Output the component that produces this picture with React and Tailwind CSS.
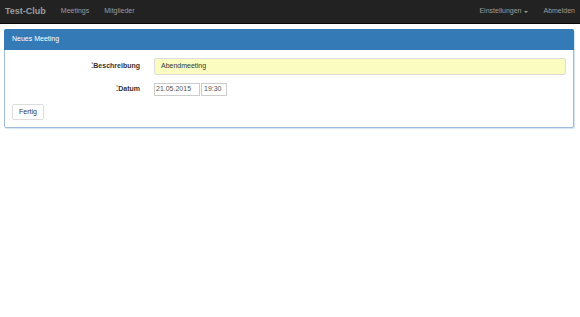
export default function App() {
  const font = { fontFamily: '"Liberation Sans", Arial, sans-serif' };
  return (
    <div className="w-[580px] h-[317px] bg-white" style={font}>
      <div className="h-[24px] bg-[#222222] border-b border-[#080808] flex items-center text-[7px] text-[#9d9d9d]">
        <span className="ml-[5px] text-[9px] font-bold">Test-Club</span>
        <span className="ml-[15px]">Meetings</span>
        <span className="ml-[15px]">Mitglieder</span>
        <div className="flex-1" />
        <span className="flex items-center">
          Einstellungen
          <span className="ml-[3px] w-0 h-0 border-l-[2px] border-r-[2px] border-t-[2px] border-l-transparent border-r-transparent border-t-[#9d9d9d]" />
        </span>
        <span className="ml-[15px] mr-[5px]">Abmelden</span>
      </div>
      <div className="ml-[4px] mt-[5px] w-[570px] border border-[#9fbbdb] rounded-[2px] shadow-[1px_1px_1px_#d3e2f1] bg-white">
        <div className="h-[21px] -mx-[1px] -mt-[1px] bg-[#337ab7] rounded-t-[2px] flex items-center pl-[8px] text-[7px] text-white">
          Neues Meeting
        </div>
        <div className="pt-[7px] pb-[7px] pl-[7px] pr-[7px] text-[7px] text-[#333]">
          <div className="flex items-center h-[18px]">
            <div className="w-[128px] text-right font-bold">
              <span className="text-[#c07070] text-[5px] align-top underline">*</span>Beschreibung
            </div>
            <div className="ml-[14px] flex-1 h-[17px] bg-[#fbfdc0] border border-[#dddddd] rounded-[2px] flex items-center pl-[6px]">
              Abendmeeting
            </div>
          </div>
          <div className="flex items-center mt-[7px] h-[14px]">
            <div className="w-[128px] text-right font-bold">
              <span className="text-[#c07070] text-[5px] align-top underline">*</span>Datum
            </div>
            <div className="ml-[14px] w-[46px] h-[13px] border border-[#cccccc] flex items-center pl-[1px] text-[#555]">21.05.2015</div>
            <div className="ml-[1px] w-[26px] h-[13px] border border-[#cccccc] flex items-center pl-[2px] text-[#555]">19:30</div>
          </div>
          <div className="mt-[8px]">
            <div className="w-[32px] h-[16px] border border-[#dddddd] rounded-[2px] flex items-center justify-center text-[#333]">Fertig</div>
          </div>
        </div>
      </div>
    </div>
  );
}
